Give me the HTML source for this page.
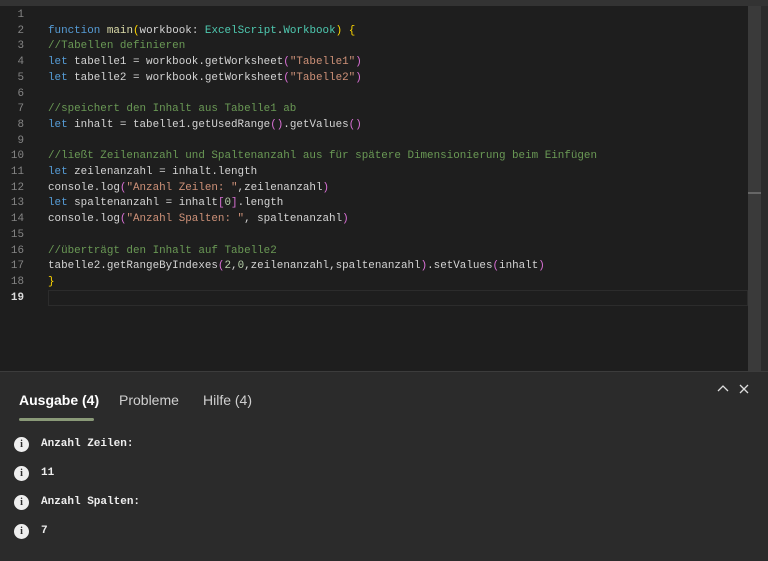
<!DOCTYPE html>
<html><head><meta charset="utf-8"><style>
body{margin:0;width:768px;height:560px;overflow:hidden;background:#1e1e1e;position:relative;font-family:"Liberation Mono",monospace}
#top{position:absolute;left:0;top:0;width:768px;height:6px;background:#333}
#ed{position:absolute;left:0;top:6px;width:748px;height:365px;background:#1e1e1e}
.ln{position:absolute;left:0;width:24px;text-align:right;color:#858585;font-size:10.9px}
.cd{position:absolute;left:48px;color:#d4d4d4;font-size:10.9px;white-space:pre}
.k{color:#569cd6}.c{color:#6a9955}.s{color:#ce9178}.t{color:#4ec9b0}.y{color:#ffd700}.p{color:#da70d6}
#cur{position:absolute;left:48px;top:284px;width:700px;height:16px;border:1px solid #2c2c2c;box-sizing:border-box}
#sb{position:absolute;left:748px;top:6px;width:13px;height:365px;background:#3a3a3a}
#sbl{position:absolute;left:748px;top:192px;width:13px;height:2px;background:#666}
#sb2{position:absolute;left:761px;top:6px;width:7px;height:365px;background:#2b2b2b}
#pn{position:absolute;left:0;top:371px;width:768px;height:189px;background:#2b2b2b;border-top:1px solid #3c3c3c;font-family:"Liberation Sans",sans-serif}
.tab{position:absolute;top:20px;font-size:14px;color:#cfcfcf}
#ul{position:absolute;left:19px;top:46px;width:75px;height:3px;background:#8a9a78;border-radius:2px}
.row{position:absolute;left:0;font-family:"Liberation Mono",monospace;font-size:11px;color:#eee;font-weight:bold}
.ic{position:absolute;left:14px;width:15px;height:15px;border-radius:50%;background:#eee;color:#2b2b2b;font-size:10px;text-align:center;line-height:15px;font-family:"Liberation Serif",serif;font-weight:bold}
.tx{position:absolute;left:41px;white-space:pre}
</style></head><body>
<div id="top"></div>
<div id="ed">
<div id="cur"></div>
</div>
<div id="sb"></div><div id="sbl"></div><div id="sb2"></div>
<div style="position:absolute;left:0;top:0">
<div class="ln" style="top:9px">1</div><div class="ln" style="top:24.7px">2</div><div class="ln" style="top:40.4px">3</div><div class="ln" style="top:56.1px">4</div><div class="ln" style="top:71.8px">5</div><div class="ln" style="top:87.5px">6</div><div class="ln" style="top:103.2px">7</div><div class="ln" style="top:118.9px">8</div><div class="ln" style="top:134.6px">9</div><div class="ln" style="top:150.3px">10</div><div class="ln" style="top:166px">11</div><div class="ln" style="top:181.7px">12</div><div class="ln" style="top:197.4px">13</div><div class="ln" style="top:213.1px">14</div><div class="ln" style="top:228.8px">15</div><div class="ln" style="top:244.5px">16</div><div class="ln" style="top:260.2px">17</div><div class="ln" style="top:275.9px">18</div><div class="ln" style="top:291.6px;color:#ddd;font-weight:bold">19</div>
<div class="cd" style="top:24.7px"><span class="k">function</span> <span style="color:#dcdcaa">main</span><span class="y">(</span>workbook: <span class="t">ExcelScript</span>.<span class="t">Workbook</span><span class="y">)</span> <span class="y">{</span></div>
<div class="cd c" style="top:40.4px">//Tabellen definieren</div>
<div class="cd" style="top:56.1px"><span class="k">let</span> tabelle1 = workbook.getWorksheet<span class="p">(</span><span class="s">"Tabelle1"</span><span class="p">)</span></div>
<div class="cd" style="top:71.8px"><span class="k">let</span> tabelle2 = workbook.getWorksheet<span class="p">(</span><span class="s">"Tabelle2"</span><span class="p">)</span></div>
<div class="cd c" style="top:103.2px">//speichert den Inhalt aus Tabelle1 ab</div>
<div class="cd" style="top:118.9px"><span class="k">let</span> inhalt = tabelle1.getUsedRange<span class="p">()</span>.getValues<span class="p">()</span></div>
<div class="cd c" style="top:150.3px">//ließt Zeilenanzahl und Spaltenanzahl aus für spätere Dimensionierung beim Einfügen</div>
<div class="cd" style="top:166px"><span class="k">let</span> zeilenanzahl = inhalt.length</div>
<div class="cd" style="top:181.7px">console.log<span class="p">(</span><span class="s">"Anzahl Zeilen: "</span>,zeilenanzahl<span class="p">)</span></div>
<div class="cd" style="top:197.4px"><span class="k">let</span> spaltenanzahl = inhalt<span class="p">[</span><span style="color:#b5cea8">0</span><span class="p">]</span>.length</div>
<div class="cd" style="top:213.1px">console.log<span class="p">(</span><span class="s">"Anzahl Spalten: "</span>, spaltenanzahl<span class="p">)</span></div>
<div class="cd c" style="top:244.5px">//überträgt den Inhalt auf Tabelle2</div>
<div class="cd" style="top:260.2px">tabelle2.getRangeByIndexes<span class="p">(</span><span style="color:#b5cea8">2</span>,<span style="color:#b5cea8">0</span>,zeilenanzahl,spaltenanzahl<span class="p">)</span>.setValues<span class="p">(</span>inhalt<span class="p">)</span></div>
<div class="cd" style="top:275.9px"><span class="y">}</span></div>
</div>
<div id="pn">
<div class="tab" style="left:19px;color:#fff;font-weight:bold">Ausgabe (4)</div>
<div class="tab" style="left:119px">Probleme</div>
<div class="tab" style="left:203px">Hilfe (4)</div>
<div id="ul"></div>
<svg style="position:absolute;left:716px;top:9px" width="40" height="14"><path d="M2 10 L7 5 L12 10" stroke="#ddd" stroke-width="1.3" fill="none"/><path d="M24 4 L32 12 M32 4 L24 12" stroke="#ddd" stroke-width="1.3"/></svg>
<div class="row" style="top:65px"><div class="ic">i</div><div class="tx" style="top:1px">Anzahl Zeilen:</div></div>
<div class="row" style="top:94px"><div class="ic">i</div><div class="tx" style="top:1px">11</div></div>
<div class="row" style="top:123px"><div class="ic">i</div><div class="tx" style="top:1px">Anzahl Spalten:</div></div>
<div class="row" style="top:152px"><div class="ic">i</div><div class="tx" style="top:1px">7</div></div>
</div>
</body></html>
